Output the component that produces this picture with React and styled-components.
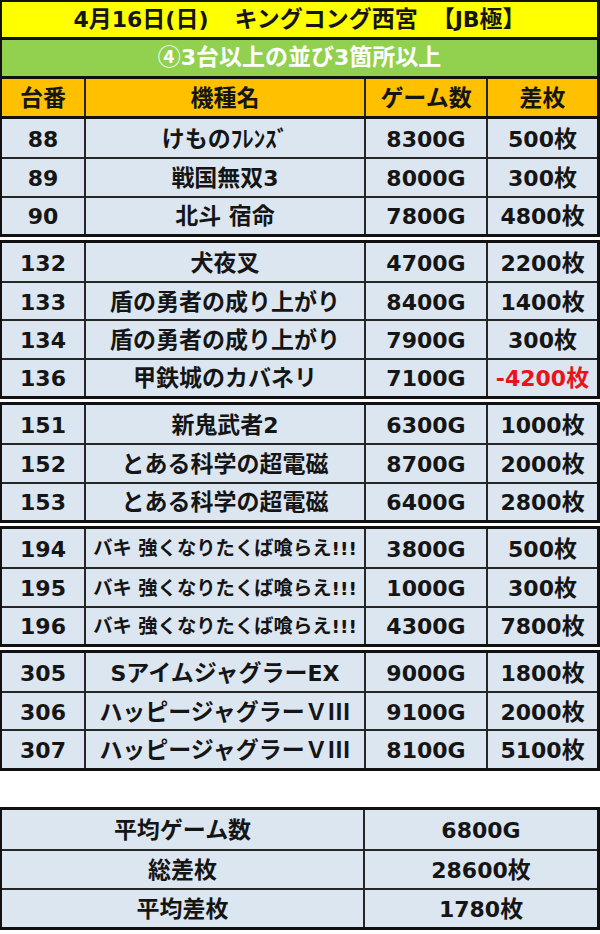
import React from "react";
import styled, { createGlobalStyle } from "styled-components";

const GlobalStyle = createGlobalStyle`
  body {
    margin: 0;
    background: #ffffff;
  }
`;

const font = `"DejaVu Sans", "Noto Sans CJK JP", sans-serif`;

const groups = [
  [
    ["88", "けものﾌﾚﾝｽﾞ", "8300G", "500枚"],
    ["89", "戦国無双3", "8000G", "300枚"],
    ["90", "北斗 宿命", "7800G", "4800枚"]
  ],
  [
    ["132", "犬夜叉", "4700G", "2200枚"],
    ["133", "盾の勇者の成り上がり", "8400G", "1400枚"],
    ["134", "盾の勇者の成り上がり", "7900G", "300枚"],
    ["136", "甲鉄城のカバネリ", "7100G", "-4200枚"]
  ],
  [
    ["151", "新鬼武者2", "6300G", "1000枚"],
    ["152", "とある科学の超電磁", "8700G", "2000枚"],
    ["153", "とある科学の超電磁", "6400G", "2800枚"]
  ],
  [
    ["194", "バキ 強くなりたくば喰らえ!!!", "3800G", "500枚"],
    ["195", "バキ 強くなりたくば喰らえ!!!", "1000G", "300枚"],
    ["196", "バキ 強くなりたくば喰らえ!!!", "4300G", "7800枚"]
  ],
  [
    ["305", "SアイムジャグラーEX", "9000G", "1800枚"],
    ["306", "ハッピージャグラーＶⅢ", "9100G", "2000枚"],
    ["307", "ハッピージャグラーＶⅢ", "8100G", "5100枚"]
  ]
];

const summary = [
  ["平均ゲーム数", "6800G"],
  ["総差枚", "28600枚"],
  ["平均差枚", "1780枚"]
];

const Sheet = styled.div`
  width: 600px;
  box-sizing: border-box;
  font-family: ${font};
  font-weight: 700;
  color: #151515;
`;

const Banner = styled.div`
  box-sizing: border-box;
  height: ${props => props.h}px;
  background: ${props => props.bg};
  color: ${props => props.fg || "#151515"};
  border: solid #111;
  border-width: ${props => (props.top ? "2px" : "0")} 3px 3px 2px;
  display: flex;
  align-items: center;
  justify-content: center;
  font-size: 22px;
  line-height: 22px;
  white-space: pre;
`;

const Part = styled.span`
  margin-left: ${props => props.space || 0}px;
`;

// Japanese runs: a touch larger than the Latin digits, kept off the line box
const Cjk = styled.span`
  font-family: "Noto Sans CJK JP", sans-serif;
  font-size: 1.045em;
  line-height: 0;
`;

const Grid = styled.div`
  display: grid;
  grid-template-columns: 82px 280px 122px 1fr;
`;

const HeadRow = styled(Grid)`
  box-sizing: border-box;
  height: 40px;
  background: #ffc000;
  border: solid #111;
  border-width: 0 3px 3px 2px;
  font-size: 22px;
`;

const Group = styled.div`
  border: solid #111;
  border-width: ${props => (props.first ? "0" : "3px")} 3px 3px 2px;
  margin-top: ${props => (props.first ? 0 : 3)}px;
  background: #dce6f1;
`;

const Row = styled(Grid)`
  box-sizing: border-box;
  height: 38.3px;
  border-top: ${props => (props.first ? "none" : "2px solid #262626")};
  font-size: 22px;
`;

const Cell = styled.div`
  display: flex;
  align-items: center;
  justify-content: center;
  white-space: pre;
  line-height: 1;
  border-left: ${props => (props.lead ? "none" : "2px solid #262626")};
  font-size: ${props => (props.small ? "18.5px" : "inherit")};
  color: ${props => (props.neg ? "#e8141b" : "inherit")};
  padding-top: 3px;
`;

const Summary = styled.div`
  margin-top: 36px;
  border: 3px solid #111;
  border-left-width: 2px;
  background: #dce6f1;
`;

const SumRow = styled.div`
  box-sizing: border-box;
  display: grid;
  grid-template-columns: 361px 1fr;
  height: 39px;
  border-top: ${props => (props.first ? "none" : "2px solid #262626")};
  font-size: 22px;
`;

const cjkRun = /([\u2160-\u217f\u2460-\u24ff\u3000-\u9fff\uff00-\uffef]+)/;

const Text = ({ children, space }) => (
  <Part space={space}>
    {children.split(cjkRun).map((part, i) =>
      i % 2 === 1 ? <Cjk key={i}>{part}</Cjk> : part
    )}
  </Part>
);

export default function App() {
  return (
    <Sheet>
      <GlobalStyle />
      <Banner top h={40} bg="#ffff00">
        <Text>4月16日(日)</Text>
        <Text space={26}>キングコング西宮</Text>
        <Text space={14}>【JB極】</Text>
      </Banner>
      <Banner h={39} bg="#92d050" fg="#ffffff">
        <Text>④3台以上の並び3箇所以上</Text>
      </Banner>
      <HeadRow>
        <Cell lead><Text>台番</Text></Cell>
        <Cell><Text>機種名</Text></Cell>
        <Cell><Text>ゲーム数</Text></Cell>
        <Cell><Text>差枚</Text></Cell>
      </HeadRow>
      {groups.map((rows, g) => (
        <Group key={g} first={g === 0}>
          {rows.map((r, i) => (
            <Row key={r[0]} first={i === 0}>
              <Cell lead><Text>{r[0]}</Text></Cell>
              <Cell small={r[1].startsWith("バキ")}><Text>{r[1]}</Text></Cell>
              <Cell><Text>{r[2]}</Text></Cell>
              <Cell neg={r[3].startsWith("-")}><Text>{r[3]}</Text></Cell>
            </Row>
          ))}
        </Group>
      ))}
      <Summary>
        {summary.map((s, i) => (
          <SumRow key={s[0]} first={i === 0}>
            <Cell lead><Text>{s[0]}</Text></Cell>
            <Cell><Text>{s[1]}</Text></Cell>
          </SumRow>
        ))}
      </Summary>
    </Sheet>
  );
}
